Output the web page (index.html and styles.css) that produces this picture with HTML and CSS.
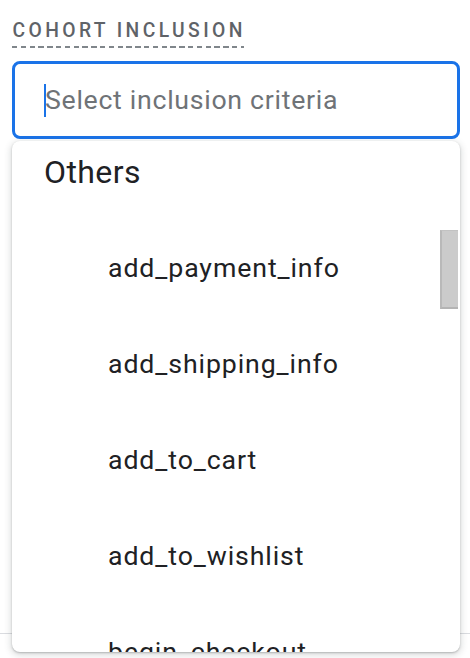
FILE: index.html
```html
<!DOCTYPE html>
<html lang="en">
<head>
<meta charset="utf-8">
<title>Cohort inclusion</title>
<link rel="stylesheet" href="styles.css">
</head>
<body>
<div class="page">
  <div class="field">
    <div class="label-row"><span class="label">COHORT INCLUSION</span></div>
    <div class="input">
      <span class="placeholder">Select inclusion criteria</span>
    </div>
  </div>
  <div class="below"></div>

  <div class="menu">
    <div class="menu-header">Others</div>
    <div class="menu-list">
      <div class="menu-item">add_payment_info</div>
      <div class="menu-item">add_shipping_info</div>
      <div class="menu-item">add_to_cart</div>
      <div class="menu-item">add_to_wishlist</div>
      <div class="menu-item">begin_checkout</div>
    </div>
    <div class="thumb"></div>
  </div>
</div>
</body>
</html>
```

FILE: styles.css
```css
* { box-sizing: border-box; }

html, body {
  margin: 0;
  padding: 0;
  background: #ffffff;
}

body {
  font-family: Roboto, "Noto Sans", Arial, sans-serif;
  width: 470px;
  height: 658px;
  overflow: hidden;
}

.page {
  position: relative;
  width: 470px;
  height: 658px;
}

.field {
  padding: 21.3px 10px 0 12px;
}

.label-row {
  height: 39.7px;
}

.label {
  display: inline-block;
  font-size: 19.3px;
  line-height: 19px;
  font-weight: 500;
  letter-spacing: 3.4px;
  color: #5f6368;
  padding-bottom: 7.4px;
  padding-left: 0.5px;
  background-image: repeating-linear-gradient(to right, #80868b 0 5.3px, transparent 5.3px 8.8px);
  background-size: calc(100% - 2px) 2px;
  background-position: left bottom;
  background-repeat: no-repeat;
}

.input {
  width: 448px;
  height: 78px;
  border: 3px solid #1a73e8;
  border-radius: 8px;
  padding: 21.5px 0 0 29px;
}

.placeholder {
  position: relative;
  display: block;
  font-size: 26.7px;
  line-height: 30px;
  letter-spacing: 0.7px;
  color: #6f7377;
  padding-left: 1px;
}

.placeholder::before {
  content: "";
  position: absolute;
  left: 0;
  top: -1.5px;
  width: 2px;
  height: 33px;
  background: #1a73e8;
}

.below {
  margin-top: 494px;
  border-top: 1px solid #dadce0;
}

.menu {
  position: absolute;
  left: 12px;
  top: 141px;
  width: 448px;
  height: 511px;
  background: #ffffff;
  border-radius: 8px;
  overflow: hidden;
  box-shadow: 0 1px 2px 0 rgba(60, 64, 67, 0.3), 0 2px 6px 2px rgba(60, 64, 67, 0.15);
}

.menu-header {
  padding: 7px 0 0 32px;
  height: 78.5px;
  font-size: 32px;
  line-height: 48px;
  letter-spacing: 0.4px;
  color: #202124;
}

.menu-item {
  height: 96px;
  line-height: 96px;
  padding-left: 96px;
  font-size: 26.7px;
  letter-spacing: 0.9px;
  color: #202124;
  white-space: nowrap;
}

.thumb {
  position: absolute;
  left: 428px;
  top: 89px;
  width: 18px;
  height: 79px;
  background: #cbcbcb;
  border-left: 2px solid #b9b9b9;
  border-bottom: 2px solid #b4b4b4;
  border-top: 1px solid #c2c2c2;
}
```
